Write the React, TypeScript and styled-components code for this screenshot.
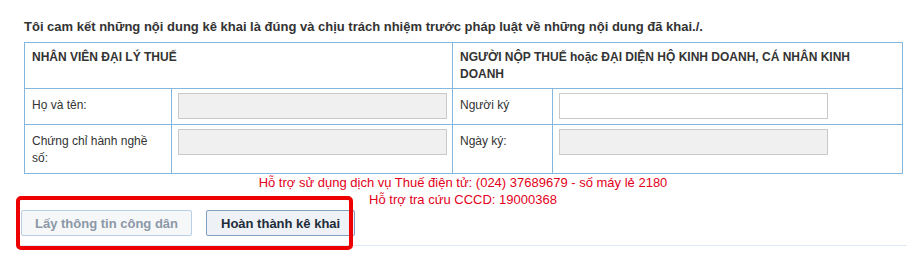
import React from "react";
import styled, { createGlobalStyle } from "styled-components";

const GlobalStyle = createGlobalStyle`
  html, body {
    margin: 0;
    padding: 0;
    background: #ffffff;
  }
  body {
    font-family: "Liberation Sans", Arial, sans-serif;
    font-size: 12px;
    color: #333333;
  }
`;

const Page = styled.div`
  padding: 19px 0 13px 24px;
  width: 883px;
`;

const Declaration = styled.p`
  margin: 0 0 7px;
  font-size: 13px;
  font-weight: bold;
  line-height: 16px;
  color: #333333;
`;

const SignTable = styled.table`
  width: 878px;
  border-collapse: collapse;
  table-layout: fixed;
`;

const HeadCell = styled.th`
  border: 1px solid #84b7e0;
  padding: 6px 7px 5px;
  text-align: left;
  vertical-align: top;
  font-size: 12px;
  font-weight: bold;
  line-height: 17px;
  color: #333333;
  height: 34px;
`;

const LabelCell = styled.td`
  border: 1px solid #84b7e0;
  padding: 8px 7px 6px;
  vertical-align: top;
  font-size: 12px;
  line-height: 17px;
  color: #333333;
`;

const FieldCell = styled.td`
  border: 1px solid #84b7e0;
  padding: 4px 6px 5px;
  vertical-align: top;
`;

const Field = styled.input<{ $disabled?: boolean }>`
  display: block;
  box-sizing: border-box;
  width: 269px;
  height: 26px;
  margin: 0;
  padding: 2px 6px;
  border: 1px solid #c9c9c9;
  background: ${(p) => (p.$disabled ? "#f0f0f0" : "#ffffff")};
  font-family: "Liberation Sans", Arial, sans-serif;
  font-size: 12px;
  outline: none;
`;

const Notice = styled.div`
  margin-top: 0;
  width: 878px;
  text-align: center;
  color: #e3001b;
  font-size: 13px;
  line-height: 17px;
`;

const ActionBar = styled.div`
  position: relative;
  display: flex;
  gap: 14px;
  margin: 2px 0 0 -3px;
  padding: 0 0 9px 0;
  width: 886px;
  border-bottom: 1px solid #dde9f5;
`;

const Highlight = styled.div`
  position: absolute;
  left: -5px;
  top: -14px;
  width: 329px;
  height: 46px;
  border: 4px solid #ee0000;
  border-radius: 5px;
  pointer-events: none;
`;

const ActionButton = styled.button<{ $primary?: boolean }>`
  box-sizing: border-box;
  height: 26px;
  padding: 0 ${(p) => (p.$primary ? "14px" : "13px")};
  border: 1px solid ${(p) => (p.$primary ? "#7f9ec2" : "#b9cfe5")};
  border-radius: 2px;
  background: ${(p) => (p.$primary ? "#eef1f5" : "#f5f7f9")};
  color: ${(p) => (p.$primary ? "#1e2c3b" : "#8c98a7")};
  font-family: "Liberation Sans", Arial, sans-serif;
  font-size: 13px;
  font-weight: bold;
  cursor: pointer;
`;

export default function App() {
  return (
    <>
      <GlobalStyle />
      <Page>
        <Declaration>
          Tôi cam kết những nội dung kê khai là đúng và chịu trách nhiệm trước pháp luật về những nội dung đã khai./.
        </Declaration>
        <SignTable>
          <colgroup>
            <col style={{ width: 147 }} />
            <col style={{ width: 281 }} />
            <col style={{ width: 100 }} />
            <col style={{ width: 350 }} />
          </colgroup>
          <tbody>
            <tr>
              <HeadCell colSpan={2}>NHÂN VIÊN ĐẠI LÝ THUẾ</HeadCell>
              <HeadCell colSpan={2}>
                NGƯỜI NỘP THUẾ hoặc ĐẠI DIỆN HỘ KINH DOANH, CÁ NHÂN KINH DOANH
              </HeadCell>
            </tr>
            <tr>
              <LabelCell>Họ và tên:</LabelCell>
              <FieldCell>
                <Field $disabled disabled />
              </FieldCell>
              <LabelCell>Người ký</LabelCell>
              <FieldCell>
                <Field />
              </FieldCell>
            </tr>
            <tr>
              <LabelCell>Chứng chỉ hành nghề số:</LabelCell>
              <FieldCell>
                <Field $disabled disabled />
              </FieldCell>
              <LabelCell>Ngày ký:</LabelCell>
              <FieldCell>
                <Field $disabled disabled />
              </FieldCell>
            </tr>
          </tbody>
        </SignTable>
        <Notice>
          Hỗ trợ sử dụng dịch vụ Thuế điện tử: (024) 37689679 - số máy lẻ 2180
          <br />
          Hỗ trợ tra cứu CCCD: 19000368
        </Notice>
        <ActionBar>
          <ActionButton type="button">Lấy thông tin công dân</ActionButton>
          <ActionButton type="button" $primary>
            Hoàn thành kê khai
          </ActionButton>
          <Highlight />
        </ActionBar>
      </Page>
    </>
  );
}
